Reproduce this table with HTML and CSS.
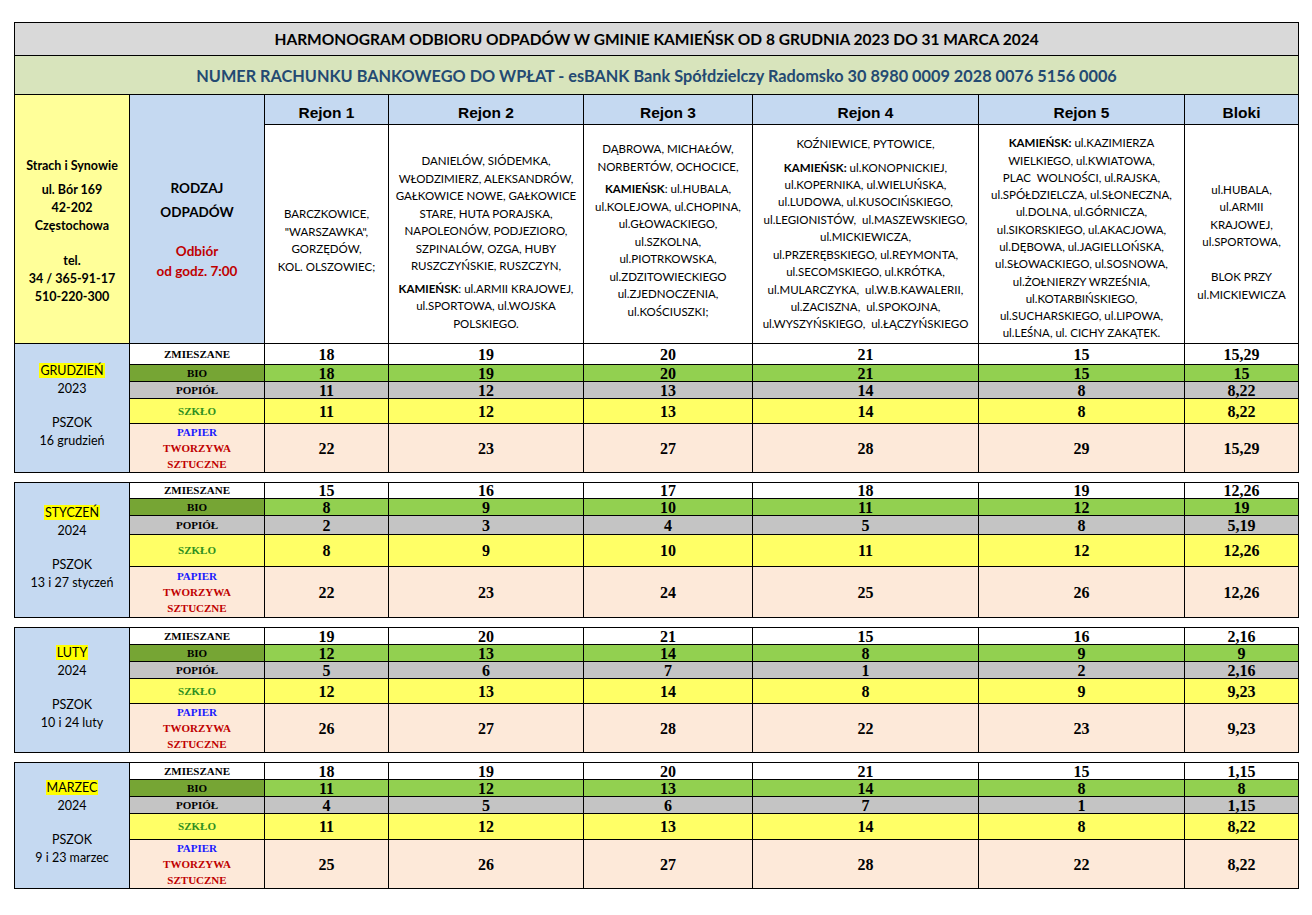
FILE: index.html
```html
<!DOCTYPE html>
<html lang="pl">
<head>
<meta charset="utf-8">
<title>Harmonogram odbioru odpadów – Gmina Kamieńsk</title>
<link rel="stylesheet" href="styles.css">
</head>
<body>
<div class="sheet">
  <table class="grid head">
    <colgroup>
      <col class="c-contact"><col class="c-kind"><col class="c-r1"><col class="c-r2"><col class="c-r3"><col class="c-r4"><col class="c-r5"><col class="c-blk">
    </colgroup>
    <tr class="row-title"><td colspan="8" class="title">HARMONOGRAM ODBIORU ODPADÓW W GMINIE KAMIEŃSK OD 8 GRUDNIA 2023 DO 31 MARCA 2024</td></tr>
    <tr class="row-bank"><td colspan="8" class="bank">NUMER RACHUNKU BANKOWEGO DO WPŁAT - esBANK Bank Spółdzielczy Radomsko 30 8980 0009 2028 0076 5156 0006</td></tr>
    <tr class="row-rejon">
      <td rowspan="2" class="contact">
        <p class="contact-name">Strach i Synowie</p>
        <p>ul. Bór 169<br>42-202<br>Częstochowa</p>
        <p class="contact-tel">tel.<br>34 / 365-91-17<br>510-220-300</p>
      </td>
      <td rowspan="2" class="kind-head">
        <p>RODZAJ<br>ODPADÓW</p>
        <p class="pickup">Odbiór<br>od godz. 7:00</p>
      </td>
      <th class="rejon">Rejon 1</th>
      <th class="rejon">Rejon 2</th>
      <th class="rejon">Rejon 3</th>
      <th class="rejon">Rejon 4</th>
      <th class="rejon">Rejon 5</th>
      <th class="rejon">Bloki</th>
    </tr>
    <tr class="row-desc">
      <td class="desc desc-r1">BARCZKOWICE,<br>"WARSZAWKA",<br>GORZĘDÓW,<br>KOL. OLSZOWIEC;</td>
      <td class="desc desc-r2"><p>DANIELÓW, SIÓDEMKA,<br>WŁODZIMIERZ, ALEKSANDRÓW,<br>GAŁKOWICE NOWE, GAŁKOWICE<br>STARE, HUTA PORAJSKA,<br>NAPOLEONÓW, PODJEZIORO,<br>SZPINALÓW, OZGA, HUBY<br>RUSZCZYŃSKIE, RUSZCZYN,</p><p><b>KAMIEŃSK</b>: ul.ARMII KRAJOWEJ,<br>ul.SPORTOWA, ul.WOJSKA<br>POLSKIEGO.</p></td>
      <td class="desc desc-r3"><p>DĄBROWA, MICHAŁÓW,<br>NORBERTÓW, OCHOCICE,</p><p><b>KAMIEŃSK</b>: ul.HUBALA,<br>ul.KOLEJOWA, ul.CHOPINA,<br>ul.GŁOWACKIEGO,<br>ul.SZKOLNA,<br>ul.PIOTRKOWSKA,<br>ul.ZDZITOWIECKIEGO<br>ul.ZJEDNOCZENIA,<br>ul.KOŚCIUSZKI;</p></td>
      <td class="desc desc-r4"><p>KOŹNIEWICE, PYTOWICE,</p><p><b>KAMIEŃSK:</b> ul.KONOPNICKIEJ,<br>ul.KOPERNIKA, ul.WIELUŃSKA,<br>ul.LUDOWA, ul.KUSOCIŃSKIEGO,<br>ul.LEGIONISTÓW,&nbsp; ul.MASZEWSKIEGO,<br>ul.MICKIEWICZA,<br>ul.PRZERĘBSKIEGO, ul.REYMONTA,<br>ul.SECOMSKIEGO, ul.KRÓTKA,<br>ul.MULARCZYKA,&nbsp; ul.W.B.KAWALERII,<br>ul.ZACISZNA,&nbsp; ul.SPOKOJNA,<br>ul.WYSZYŃSKIEGO,&nbsp; ul.ŁĄCZYŃSKIEGO</p></td>
      <td class="desc desc-r5"><b>KAMIEŃSK:</b> ul.KAZIMIERZA<br>WIELKIEGO, ul.KWIATOWA,<br>PLAC&nbsp; WOLNOŚCI, ul.RAJSKA,<br>ul.SPÓŁDZIELCZA, ul.SŁONECZNA,<br>ul.DOLNA, ul.GÓRNICZA,<br>ul.SIKORSKIEGO, ul.AKACJOWA,<br>ul.DĘBOWA, ul.JAGIELLOŃSKA,<br>ul.SŁOWACKIEGO, ul.SOSNOWA,<br>ul.ŻOŁNIERZY WRZEŚNIA,<br>ul.KOTARBIŃSKIEGO,<br>ul.SUCHARSKIEGO, ul.LIPOWA,<br>ul.LEŚNA, ul. CICHY ZAKĄTEK.</td>
      <td class="desc desc-blk">ul.HUBALA,<br>ul.ARMII<br>KRAJOWEJ,<br>ul.SPORTOWA,<br><br>BLOK PRZY<br>ul.MICKIEWICZA</td>
    </tr>
  </table>

  <table class="grid month month-dec">
    <colgroup>
      <col class="c-contact"><col class="c-kind"><col class="c-r1"><col class="c-r2"><col class="c-r3"><col class="c-r4"><col class="c-r5"><col class="c-blk">
    </colgroup>
    <tr class="row-mix">
      <td rowspan="5" class="month-label"><p><span class="hl">GRUDZIEŃ</span><br>2023</p><p>PSZOK<br>16 grudzień</p></td>
      <td class="kind kind-mix">ZMIESZANE</td><td>18</td><td>19</td><td>20</td><td>21</td><td>15</td><td>15,29</td>
    </tr>
    <tr class="row-bio"><td class="kind kind-bio">BIO</td><td>18</td><td>19</td><td>20</td><td>21</td><td>15</td><td>15</td></tr>
    <tr class="row-ash"><td class="kind">POPIÓŁ</td><td>11</td><td>12</td><td>13</td><td>14</td><td>8</td><td>8,22</td></tr>
    <tr class="row-glass"><td class="kind kind-glass">SZKŁO</td><td>11</td><td>12</td><td>13</td><td>14</td><td>8</td><td>8,22</td></tr>
    <tr class="row-paper"><td class="kind kind-paper"><span class="blue">PAPIER</span><br><span class="red">TWORZYWA<br>SZTUCZNE</span></td><td>22</td><td>23</td><td>27</td><td>28</td><td>29</td><td>15,29</td></tr>
  </table>

  <table class="grid month month-jan">
    <colgroup>
      <col class="c-contact"><col class="c-kind"><col class="c-r1"><col class="c-r2"><col class="c-r3"><col class="c-r4"><col class="c-r5"><col class="c-blk">
    </colgroup>
    <tr class="row-mix">
      <td rowspan="5" class="month-label"><p><span class="hl">STYCZEŃ</span><br>2024</p><p>PSZOK<br>13 i 27 styczeń</p></td>
      <td class="kind kind-mix">ZMIESZANE</td><td>15</td><td>16</td><td>17</td><td>18</td><td>19</td><td>12,26</td>
    </tr>
    <tr class="row-bio"><td class="kind kind-bio">BIO</td><td>8</td><td>9</td><td>10</td><td>11</td><td>12</td><td>19</td></tr>
    <tr class="row-ash"><td class="kind">POPIÓŁ</td><td>2</td><td>3</td><td>4</td><td>5</td><td>8</td><td>5,19</td></tr>
    <tr class="row-glass"><td class="kind kind-glass">SZKŁO</td><td>8</td><td>9</td><td>10</td><td>11</td><td>12</td><td>12,26</td></tr>
    <tr class="row-paper"><td class="kind kind-paper"><span class="blue">PAPIER</span><br><span class="red">TWORZYWA<br>SZTUCZNE</span></td><td>22</td><td>23</td><td>24</td><td>25</td><td>26</td><td>12,26</td></tr>
  </table>

  <table class="grid month month-feb">
    <colgroup>
      <col class="c-contact"><col class="c-kind"><col class="c-r1"><col class="c-r2"><col class="c-r3"><col class="c-r4"><col class="c-r5"><col class="c-blk">
    </colgroup>
    <tr class="row-mix">
      <td rowspan="5" class="month-label"><p><span class="hl">LUTY</span><br>2024</p><p>PSZOK<br>10 i 24 luty</p></td>
      <td class="kind kind-mix">ZMIESZANE</td><td>19</td><td>20</td><td>21</td><td>15</td><td>16</td><td>2,16</td>
    </tr>
    <tr class="row-bio"><td class="kind kind-bio">BIO</td><td>12</td><td>13</td><td>14</td><td>8</td><td>9</td><td>9</td></tr>
    <tr class="row-ash"><td class="kind">POPIÓŁ</td><td>5</td><td>6</td><td>7</td><td>1</td><td>2</td><td>2,16</td></tr>
    <tr class="row-glass"><td class="kind kind-glass">SZKŁO</td><td>12</td><td>13</td><td>14</td><td>8</td><td>9</td><td>9,23</td></tr>
    <tr class="row-paper"><td class="kind kind-paper"><span class="blue">PAPIER</span><br><span class="red">TWORZYWA<br>SZTUCZNE</span></td><td>26</td><td>27</td><td>28</td><td>22</td><td>23</td><td>9,23</td></tr>
  </table>

  <table class="grid month month-mar">
    <colgroup>
      <col class="c-contact"><col class="c-kind"><col class="c-r1"><col class="c-r2"><col class="c-r3"><col class="c-r4"><col class="c-r5"><col class="c-blk">
    </colgroup>
    <tr class="row-mix">
      <td rowspan="5" class="month-label"><p><span class="hl">MARZEC</span><br>2024</p><p>PSZOK<br>9 i 23 marzec</p></td>
      <td class="kind kind-mix">ZMIESZANE</td><td>18</td><td>19</td><td>20</td><td>21</td><td>15</td><td>1,15</td>
    </tr>
    <tr class="row-bio"><td class="kind kind-bio">BIO</td><td>11</td><td>12</td><td>13</td><td>14</td><td>8</td><td>8</td></tr>
    <tr class="row-ash"><td class="kind">POPIÓŁ</td><td>4</td><td>5</td><td>6</td><td>7</td><td>1</td><td>1,15</td></tr>
    <tr class="row-glass"><td class="kind kind-glass">SZKŁO</td><td>11</td><td>12</td><td>13</td><td>14</td><td>8</td><td>8,22</td></tr>
    <tr class="row-paper"><td class="kind kind-paper"><span class="blue">PAPIER</span><br><span class="red">TWORZYWA<br>SZTUCZNE</span></td><td>25</td><td>26</td><td>27</td><td>28</td><td>22</td><td>8,22</td></tr>
  </table>
</div>
</body>
</html>
```

FILE: styles.css
```css
* { box-sizing: border-box; }

body {
  margin: 0;
  background: #ffffff;
  color: #000;
  font-family: "Lato", "Open Sans", sans-serif;
}

.sheet {
  padding: 22px 0 20px 14px;
}

p { margin: 0; }

td, th { padding: 0; }

.grid {
  border-collapse: collapse;
  table-layout: fixed;
  width: 1284px;
}

.grid td,
.grid th {
  border: 1px solid #000;
  text-align: center;
  vertical-align: middle;
}

.c-contact { width: 115px; }
.c-kind { width: 135px; }
.c-r1 { width: 124px; }
.c-r2 { width: 195px; }
.c-r3 { width: 169px; }
.c-r4 { width: 226px; }
.c-r5 { width: 206px; }
.c-blk { width: 114px; }

/* header */
.row-title { height: 33px; }
.row-bank { height: 39px; }
.row-rejon { height: 30px; }
.row-desc { height: 219px; }

.title {
  background: #d9d9d9;
  font-weight: 700;
  font-size: 15.5px;
}

.bank {
  background: #d8e4bc;
  color: #244a72;
  font-weight: 700;
  font-size: 16.3px;
}

.contact {
  background: #ffff99;
  font-weight: 700;
  font-size: 12.5px;
  line-height: 18px;
  padding-top: 24px;
}
.contact-name { margin-bottom: 6px; }
.contact-tel { margin-top: 17px; }

.kind-head {
  background: #c5d9f1;
  font-weight: 700;
  font-size: 13.5px;
  line-height: 24px;
  padding-top: 18px;
}
.pickup {
  color: #c00000;
  margin-top: 17px;
  line-height: 20px;
}

.rejon {
  background: #c5d9f1;
  font-family: "Liberation Sans", Arial, sans-serif;
  font-weight: 700;
  font-size: 15.5px;
  padding-top: 6px;
}

.desc {
  background: #fff;
  font-size: 11.5px;
  line-height: 17.5px;
}
.desc p + p { margin-top: 5px; }
.desc-r1 { padding-top: 12px; }
.desc-r2 { padding-top: 16px; }
.desc-r3 { padding-bottom: 8px; }
.desc-r4 { line-height: 17.4px; }
.desc-r4 p + p { margin-top: 6px; }
.desc-r5 { padding-top: 8px; line-height: 17.3px; }
.desc-blk { padding-top: 16px; }

/* month blocks */
.month {
  margin-top: 9px;
  font-family: "Liberation Serif", "Times New Roman", serif;
  font-weight: 700;
  font-size: 16px;
  line-height: 13px;
}
.month-dec { margin-top: -1px; }

.month-label {
  background: #c5d9f1;
  font-family: "Lato", "Open Sans", sans-serif;
  font-weight: 400;
  font-size: 12.5px;
  line-height: 18px;
  padding-bottom: 5px;
}
.month-label p + p { margin-top: 16px; }
.hl { background: #ffff00; padding: 0 1px; }

.kind {
  font-size: 11px;
  line-height: 13px;
}
.kind-paper { line-height: 16px; }
.kind-bio { background: #76a534 !important; }
.kind-glass { color: #2f8f1f; }
.blue { color: #1a1aff; }
.red { color: #c00000; }

.row-mix td { background: #fff; }
.row-bio td { background: #92d050; }
.row-ash td { background: #c4c4c4; }
.row-glass td { background: #ffff66; }
.row-paper td { background: #fde9d9; }
.month .month-label { background: #c5d9f1; }

.month-dec .row-mix { height: 21px; }
.month-dec .row-bio { height: 17px; }
.month-dec .row-ash { height: 17px; }
.month-dec .row-glass { height: 25px; }
.month-dec .row-paper { height: 49px; }

.month-jan .row-mix { height: 16px; }
.month-jan .row-bio { height: 17px; }
.month-jan .row-ash { height: 19px; }
.month-jan .row-glass { height: 32px; }
.month-jan .row-paper { height: 51px; }

.month-feb .row-mix { height: 17px; }
.month-feb .row-bio { height: 17px; }
.month-feb .row-ash { height: 17px; }
.month-feb .row-glass { height: 25px; }
.month-feb .row-paper { height: 49px; }

.month-mar .row-mix { height: 17px; }
.month-mar .row-bio { height: 17px; }
.month-mar .row-ash { height: 17px; }
.month-mar .row-glass { height: 26px; }
.month-mar .row-paper { height: 49px; }
```
